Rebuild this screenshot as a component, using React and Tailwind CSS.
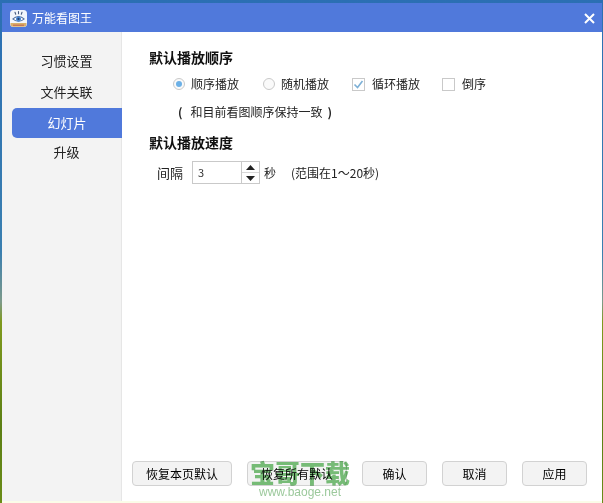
const FONT = "font-['Noto_Sans_CJK_SC','Liberation_Sans',sans-serif]";

function Logo() {
  return (
    <svg width="17" height="17" viewBox="0 0 17 17" className="shrink-0">
      <rect x="0" y="0" width="17" height="17" rx="3.5" fill="#f2f6fc" />
      <path d="M0.5 13 H16.5 V14 A2.8 2.8 0 0 1 13.7 16.8 H3.3 A2.8 2.8 0 0 1 0.5 14 Z" fill="#d9b06a" />
      <path d="M3 15.2 H14" stroke="#c0604d" strokeWidth="1" />
      <path d="M5 2.2 L5.7 4.2 M8.5 1.5 V3.8 M12 2.2 L11.3 4.2" stroke="#4a5d80" strokeWidth="1.1" strokeLinecap="round" />
      <path d="M2 9 Q8.5 3 15 9 Q8.5 14.4 2 9 Z" fill="#4a6a9c" />
      <path d="M3.6 9 Q8.5 4.8 13.4 9 Q8.5 12.8 3.6 9 Z" fill="#ffffff" />
      <circle cx="8.5" cy="8.9" r="2.5" fill="#4a8ad8" />
      <circle cx="8.5" cy="8.9" r="1.1" fill="#24406e" />
    </svg>
  );
}

function Radio({ checked }) {
  return (
    <span className="w-[12px] h-[12px] rounded-full border border-[#c9c9c9] bg-[#fafafa] flex items-center justify-center shrink-0">
      {checked && <span className="w-[6px] h-[6px] rounded-full bg-[#6cb0e6]" />}
    </span>
  );
}

function Check({ checked }) {
  return (
    <span className="w-[13px] h-[13px] border border-[#c9c9c9] bg-white flex items-center justify-center shrink-0">
      {checked && (
        <svg width="11" height="11" viewBox="0 0 11 11">
          <path d="M1.5 5.5 L4.5 8.5 L9.5 2" fill="none" stroke="#7db0d6" strokeWidth="1.6" />
        </svg>
      )}
    </span>
  );
}

function Btn({ w, children }) {
  return (
    <div className={`${w} h-[25px] rounded-[4px] border border-[#d2d2d2] bg-[#f3f3f3] flex items-center justify-center text-[12px] text-black`}>
      {children}
    </div>
  );
}

export default function App() {
  return (
    <div className={`${FONT} relative w-[603px] h-[503px] overflow-hidden pl-[2px] pr-px pt-[3px] bg-[linear-gradient(180deg,#2b6fb3_0%,#3a7fb0_50%,#7d9a8a_60%,#7f9a1e_64%,#5c7f14_85%,#6a8c18_100%)]`}>
      <div className="w-full h-full flex flex-col bg-white border-b-2 border-[#fbfce8]">
        <div className="h-[29px] shrink-0 bg-[#5079db] flex items-center pl-[8px] pr-[7px] pt-px text-white">
          <Logo />
          <span className="ml-[5px] text-[12px] leading-none">万能看图王</span>
          <svg width="11" height="11" viewBox="0 0 11 11" className="ml-auto">
            <path d="M1 1 L10 10 M10 1 L1 10" stroke="#ffffff" strokeWidth="2" />
          </svg>
        </div>
        <div className="flex-1 flex min-h-0">
          <div className="w-[120px] shrink-0 bg-[#f3f3f3] border-r border-[#e6e6e6] pt-[14px] pl-[10px] flex flex-col gap-px text-[13px] text-[#222]">
            <div className="h-[30px] flex items-center justify-center">习惯设置</div>
            <div className="h-[30px] flex items-center justify-center">文件关联</div>
            <div className="h-[30px] flex items-center justify-center rounded-l-[5px] bg-[#5079db] text-white -mr-px">幻灯片</div>
            <div className="h-[30px] -mt-[2px] flex items-center justify-center">升级</div>
          </div>
          <div className="flex-1 flex flex-col pl-[27px] pr-[15px] pt-[16px] pb-[15px] text-[12px] text-[#222]">
            <div className="h-[18px] flex items-center text-[14px] font-bold leading-none text-[#111]">默认播放顺序</div>
            <div className="mt-[9px] h-[18px] flex items-center pl-[24px]">
              <div className="w-[90px] flex items-center gap-[6px]"><Radio checked /><span>顺序播放</span></div>
              <div className="w-[89px] flex items-center gap-[6px]"><Radio /><span>随机播放</span></div>
              <div className="w-[90px] flex items-center gap-[7px]"><Check checked /><span>循环播放</span></div>
              <div className="flex items-center gap-[7px]"><Check /><span>倒序</span></div>
            </div>
            <div className="mt-[10px] h-[18px] flex items-center pl-[29px] leading-none">
              <span className="font-bold">(</span>
              <span className="ml-[8px]">和目前看图顺序保持一致</span>
              <span className="ml-[5px] font-bold">)</span>
            </div>
            <div className="mt-[12px] h-[18px] flex items-center text-[14px] font-bold leading-none text-[#111]">默认播放速度</div>
            <div className="mt-[10px] h-[23px] flex items-center pl-[8px]">
              <span className="text-[13px] w-[35px]">间隔</span>
              <div className="w-[68px] h-[23px] border border-[#c9c9c9] flex bg-white">
                <div className="flex-1 pl-[5px] flex items-center text-[11px] text-[#333]">3</div>
                <div className="w-[18px] border-l border-[#c9c9c9] flex flex-col">
                  <div className="flex-1 flex items-center justify-center border-b border-[#d8d8d8]">
                    <svg width="9" height="5" viewBox="0 0 9 5"><path d="M4.5 0 L9 5 H0 Z" fill="#222" /></svg>
                  </div>
                  <div className="flex-1 flex items-center justify-center">
                    <svg width="9" height="5" viewBox="0 0 9 5"><path d="M0 0 H9 L4.5 5 Z" fill="#222" /></svg>
                  </div>
                </div>
              </div>
              <span className="ml-[4px]">秒</span>
              <span className="ml-[15px] text-[12px]">(范围在1～20秒)</span>
            </div>
            <div className="mt-auto -ml-[17px] flex gap-[15px]">
              <Btn w="w-[100px]">恢复本页默认</Btn>
              <Btn w="w-[100px]">恢复所有默认</Btn>
              <Btn w="w-[65px]">确认</Btn>
              <Btn w="w-[65px]">取消</Btn>
              <Btn w="w-[65px]">应用</Btn>
            </div>
          </div>
        </div>
      </div>
      <div className="absolute left-[249px] top-[457px] w-[102px] flex flex-col items-center pointer-events-none mix-blend-multiply">
        <div className="text-[25px] leading-[30px] font-black text-[#7cc47c] whitespace-nowrap">宝哥下载</div>
        <div className="-mt-[2px] text-[12px] leading-[14px] font-['Liberation_Sans',sans-serif] text-[#9cc99c]">www.baoge.net</div>
      </div>
    </div>
  );
}
